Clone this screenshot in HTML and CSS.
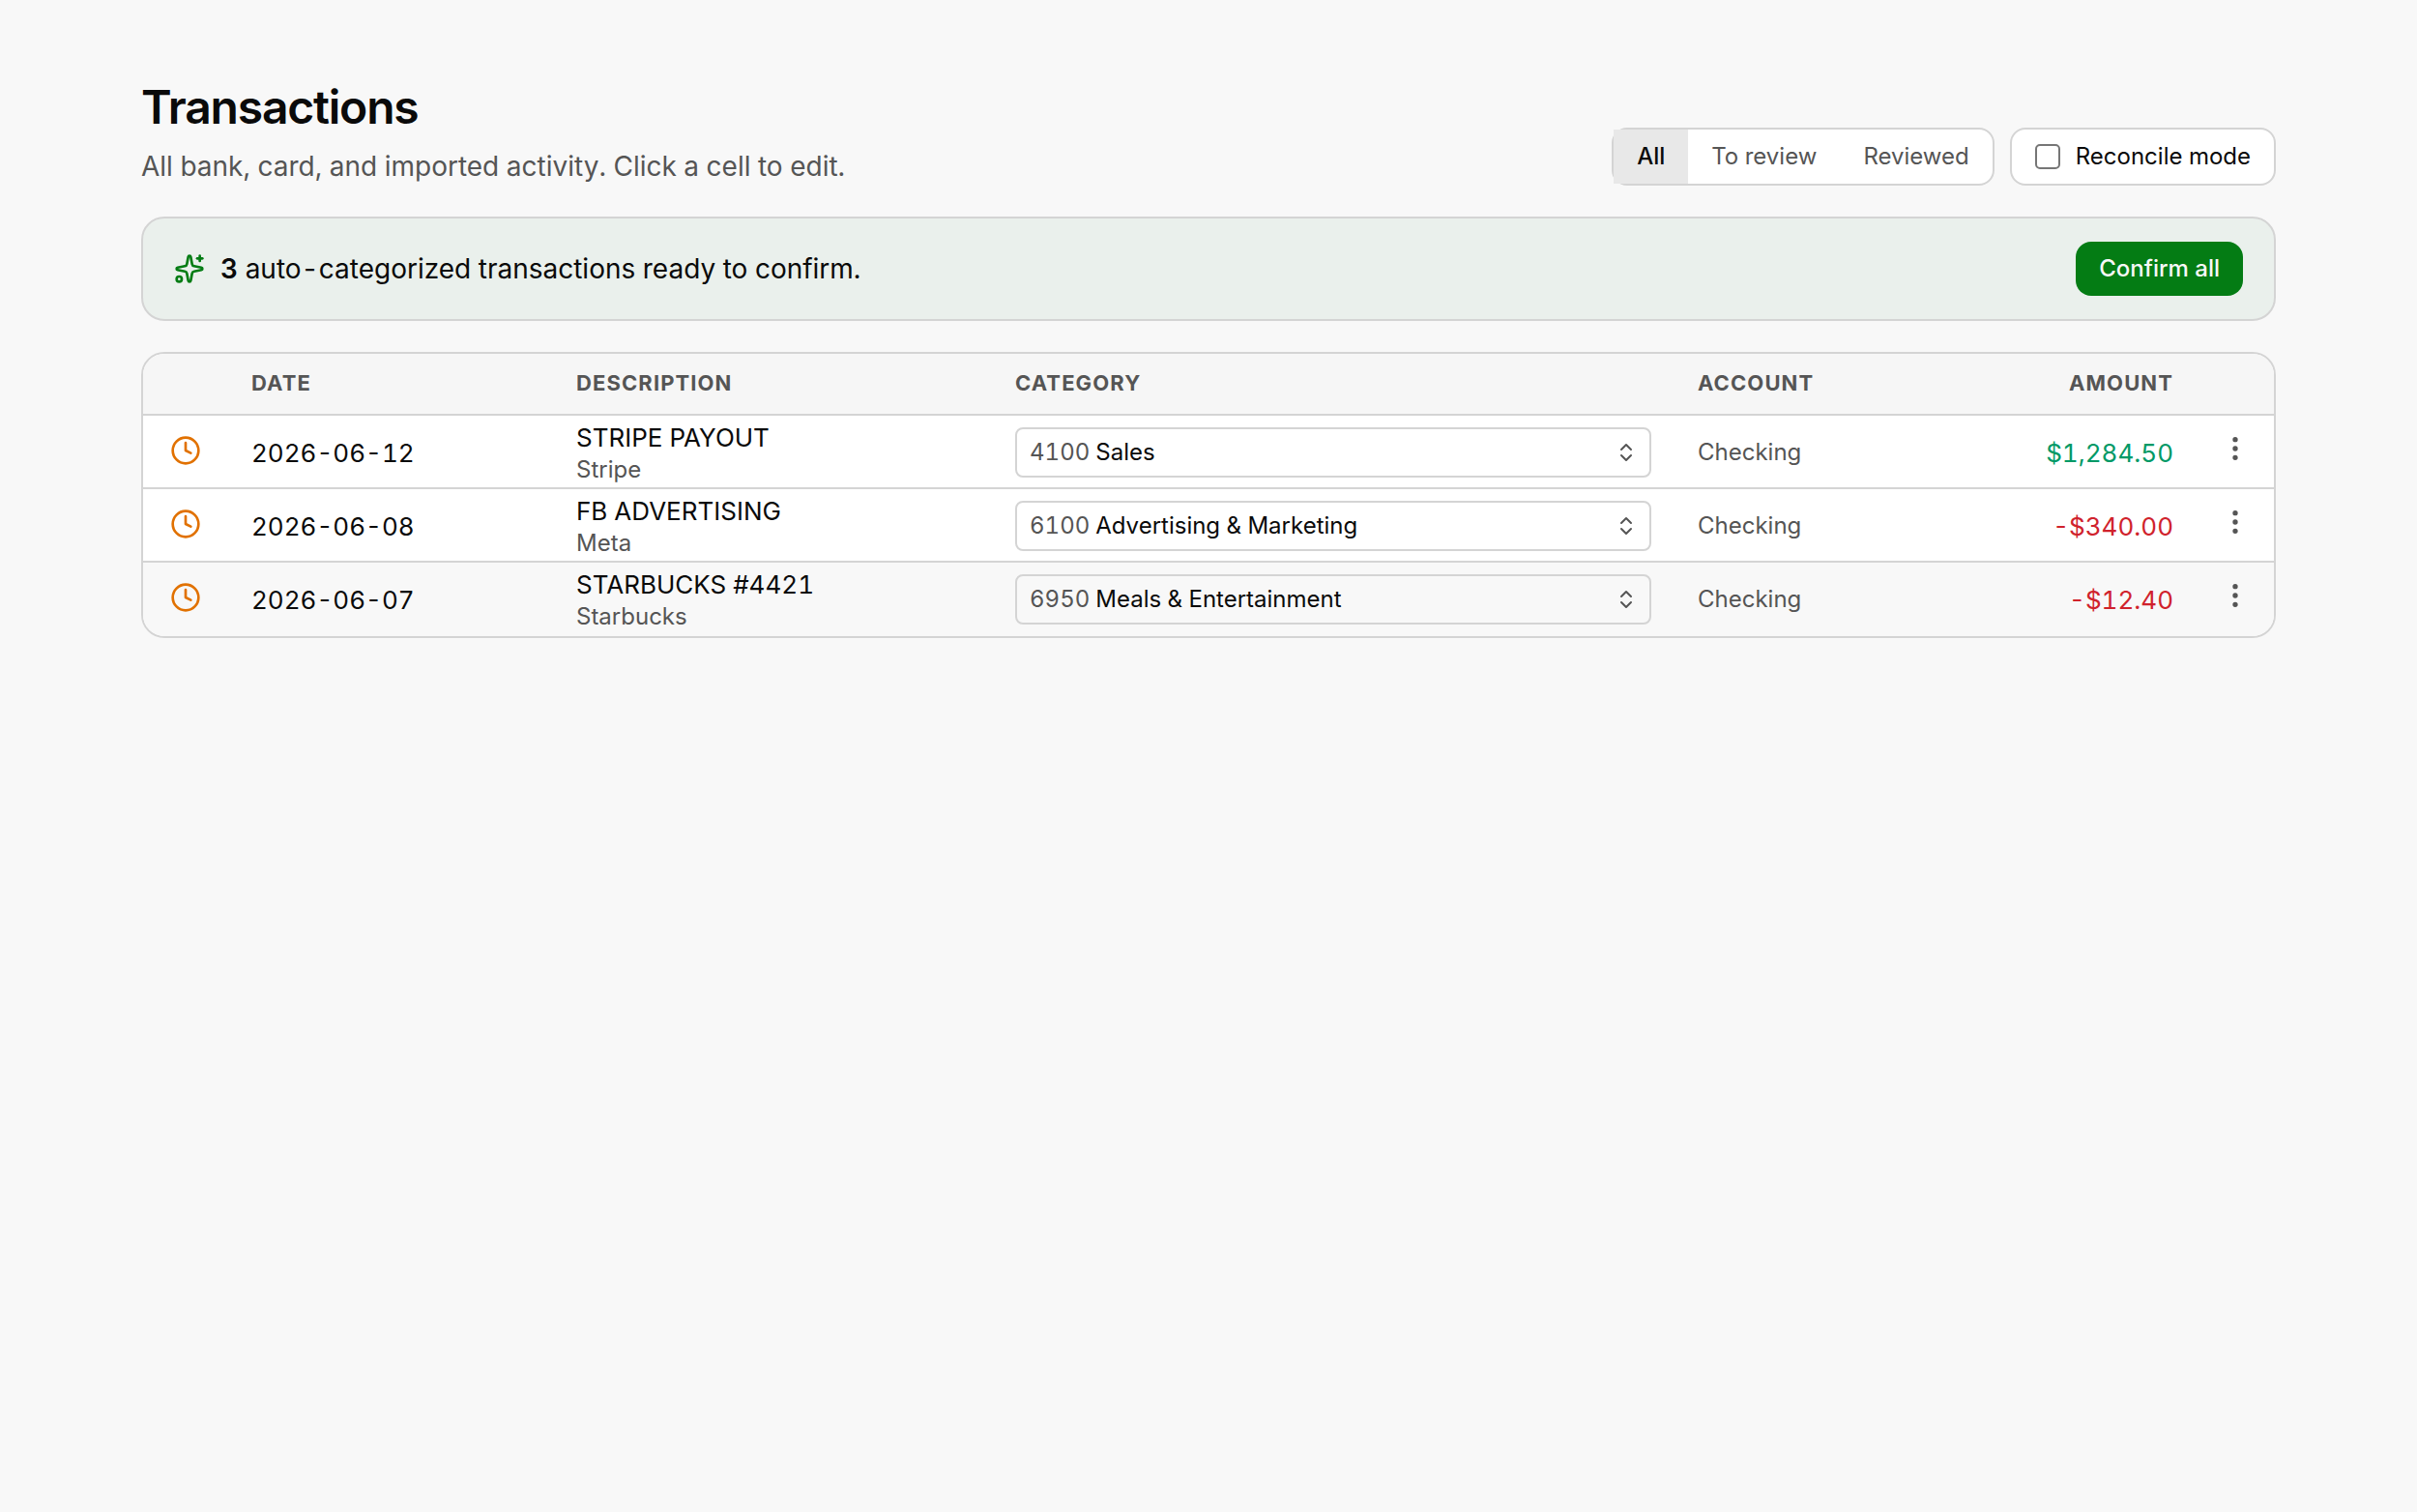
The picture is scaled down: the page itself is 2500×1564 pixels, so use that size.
FILE: index.html
```html
<!DOCTYPE html>
<html lang="en">
<head>
<meta charset="utf-8">
<meta name="viewport" content="width=device-width, initial-scale=1">
<title>Transactions</title>
<link rel="stylesheet" href="styles.css">
</head>
<body>
<svg class="sprite" aria-hidden="true">
  <symbol id="clock" viewBox="0 0 24 24"><circle cx="12" cy="12" r="10"/><path d="M12 6v6l4 2"/></symbol>
  <symbol id="chevrons" viewBox="0 0 24 24"><path d="m7 15 5 5 5-5"/><path d="m7 9 5-5 5 5"/></symbol>
  <symbol id="dots" viewBox="0 0 24 24"><circle cx="12" cy="12" r="1"/><circle cx="12" cy="5" r="1"/><circle cx="12" cy="19" r="1"/></symbol>
</svg>
<main class="page">
  <header class="header">
    <div>
      <h1 class="title">Transactions</h1>
      <p class="subtitle">All bank, card, and imported activity. Click a cell to edit.</p>
    </div>
    <div class="controls">
      <div class="segments" role="group" aria-label="Filter transactions">
        <button class="segment segment-active" type="button" aria-pressed="true">All</button>
        <button class="segment" type="button" aria-pressed="false">To review</button>
        <button class="segment" type="button" aria-pressed="false">Reviewed</button>
      </div>
      <label class="reconcile"><input class="checkbox" type="checkbox">Reconcile mode</label>
    </div>
  </header>

  <section class="banner">
    <svg class="icon icon-sparkles" viewBox="0 0 24 24" aria-hidden="true">
      <path d="M11.017 2.814a1 1 0 0 1 1.966 0l1.051 5.558a2 2 0 0 0 1.594 1.594l5.558 1.051a1 1 0 0 1 0 1.966l-5.558 1.051a2 2 0 0 0-1.594 1.594l-1.051 5.558a1 1 0 0 1-1.966 0l-1.051-5.558a2 2 0 0 0-1.594-1.594l-5.558-1.051a1 1 0 0 1 0-1.966l5.558-1.051a2 2 0 0 0 1.594-1.594z"/>
      <path d="M20 2v4"/><path d="M22 4h-4"/><circle cx="4" cy="20" r="2"/>
    </svg>
    <p class="banner-text"><strong>3</strong> auto-categorized transactions ready to confirm.</p>
    <button class="confirm" type="button">Confirm all</button>
  </section>

  <div class="card">
    <table class="table">
      <colgroup>
        <col class="col-status"><col class="col-date"><col class="col-description"><col><col class="col-account"><col class="col-amount"><col class="col-menu">
      </colgroup>
      <thead>
        <tr>
          <th aria-label="Status"></th><th>Date</th><th>Description</th><th>Category</th><th>Account</th><th class="right">Amount</th><th aria-label="Actions"></th>
        </tr>
      </thead>
      <tbody>
        <tr>
          <td class="status"><svg class="icon icon-clock" role="img" aria-label="To review"><use href="#clock"/></svg></td>
          <td>2026-06-12</td>
          <td class="details"><div>STRIPE PAYOUT</div><div class="merchant">Stripe</div></td>
          <td class="category-cell"><div class="category"><label class="code" for="category-1">4100</label><select class="select" id="category-1"><option>Sales</option></select><svg class="icon icon-chevrons" aria-hidden="true"><use href="#chevrons"/></svg></div></td>
          <td class="account">Checking</td>
          <td class="right positive">$1,284.50</td>
          <td class="actions"><button class="menu" type="button" aria-label="Actions"><svg class="icon icon-dots"><use href="#dots"/></svg></button></td>
        </tr>
        <tr>
          <td class="status"><svg class="icon icon-clock" role="img" aria-label="To review"><use href="#clock"/></svg></td>
          <td>2026-06-08</td>
          <td class="details"><div>FB ADVERTISING</div><div class="merchant">Meta</div></td>
          <td class="category-cell"><div class="category"><label class="code" for="category-2">6100</label><select class="select" id="category-2"><option>Advertising &amp; Marketing</option></select><svg class="icon icon-chevrons" aria-hidden="true"><use href="#chevrons"/></svg></div></td>
          <td class="account">Checking</td>
          <td class="right negative">-$340.00</td>
          <td class="actions"><button class="menu" type="button" aria-label="Actions"><svg class="icon icon-dots"><use href="#dots"/></svg></button></td>
        </tr>
        <tr class="muted-row">
          <td class="status"><svg class="icon icon-clock" role="img" aria-label="To review"><use href="#clock"/></svg></td>
          <td>2026-06-07</td>
          <td class="details"><div>STARBUCKS #4421</div><div class="merchant">Starbucks</div></td>
          <td class="category-cell"><div class="category"><label class="code" for="category-3">6950</label><select class="select" id="category-3"><option>Meals &amp; Entertainment</option></select><svg class="icon icon-chevrons" aria-hidden="true"><use href="#chevrons"/></svg></div></td>
          <td class="account">Checking</td>
          <td class="right negative">-$12.40</td>
          <td class="actions"><button class="menu" type="button" aria-label="Actions"><svg class="icon icon-dots"><use href="#dots"/></svg></button></td>
        </tr>
      </tbody>
    </table>
  </div>
</main>
</body>
</html>
```
FILE: styles.css
```css
:root {
  --bg: #f8f8f8;
  --ink: #0a0a0a;
  --muted: #555555;
  --border: #d4d4d4;
  --green: #047c14;
}
*, *::before, *::after { box-sizing: border-box; }
body {
  margin: 0;
  background: var(--bg);
  color: var(--ink);
  font-family: Inter, "Liberation Sans", sans-serif;
  font-size: 28px;
  line-height: 40px;
  font-feature-settings: "tnum";
}
button, select, input { font: inherit; font-feature-settings: inherit; color: inherit; margin: 0; }
h1, p { margin: 0; }
.sprite { display: none; }
.icon {
  display: block;
  flex: none;
  fill: none;
  stroke: currentColor;
  stroke-width: 2;
  stroke-linecap: round;
  stroke-linejoin: round;
}
.page {
  max-width: 2304px;
  margin: 0 auto;
  padding: 80px 48px;
  display: flex;
  flex-direction: column;
  gap: 32px;
}
.header {
  display: flex;
  flex-wrap: wrap;
  align-items: flex-end;
  justify-content: space-between;
  gap: 24px;
}
.title {
  font-size: 48px;
  line-height: 62px;
  font-weight: 600;
  letter-spacing: -0.025em;
}
.subtitle { margin-top: 10px; color: var(--muted); }
.controls { display: flex; gap: 16px; font-size: 24px; line-height: 32px; }
.segments, .reconcile {
  display: flex;
  background: #ffffff;
  border: 2px solid var(--border);
  border-radius: 16px;
}
.segment {
  padding: 12px 24px;
  border: 0;
  background: none;
  color: var(--muted);
}
.segment-active { background: #e8e8e8; color: var(--ink); font-weight: 500; }
.reconcile { align-items: center; gap: 16px; padding: 12px 24px; }
.checkbox {
  appearance: none;
  width: 26px;
  height: 26px;
  border: 2px solid #767676;
  border-radius: 5px;
  background: #ffffff;
}
.banner {
  display: flex;
  align-items: center;
  gap: 16px;
  padding: 24px 32px;
  border: 2px solid var(--border);
  border-radius: 24px;
  background: #eaf0ec;
}
.icon-sparkles { width: 32px; height: 32px; color: var(--green); }
.banner-text { flex: 1; }
.banner-text strong { font-weight: 600; }
.confirm {
  padding: 12px 24px;
  border: 0;
  border-radius: 16px;
  background: var(--green);
  color: #f8f8f8;
  font-size: 24px;
  line-height: 32px;
  font-weight: 500;
}
.card {
  overflow: hidden;
  border: 2px solid var(--border);
  border-radius: 24px;
  background: #ffffff;
}
.table {
  width: 100%;
  table-layout: fixed;
  border-collapse: separate;
  border-spacing: 0;
}
.col-status { width: 88px; }
.col-date { width: 336px; }
.col-description { width: 454px; }
.col-account { width: 270px; }
.col-amount { width: 270px; }
.col-menu { width: 80px; }
th {
  padding: 14px 24px 16px;
  border-bottom: 2px solid var(--border);
  background: #f6f6f6;
  color: var(--muted);
  font-size: 22px;
  line-height: 32px;
  font-weight: 700;
  letter-spacing: 0.05em;
  text-align: left;
  text-transform: uppercase;
}
td {
  height: 76px;
  padding: 4px 24px 0;
  border-bottom: 2px solid var(--border);
  font-size: 26px;
  line-height: 32px;
}
tbody tr:last-child td { border-bottom-color: transparent; }
.right { text-align: right; }
.muted-row { background: #f8f8f8; }
.positive { color: #009966; }
.negative { color: #d0222c; }
.status { padding: 0 0 2px; }
.actions { padding: 0 0 6px; }
.category-cell, .account { padding-top: 2px; }
.icon-clock { width: 32px; height: 32px; margin: 0 auto; color: #e17100; }
.merchant, .account { color: var(--muted); font-size: 24px; }
.details { padding-top: 6px; }
.merchant { line-height: 34px; }
.category {
  display: flex;
  align-items: center;
  gap: 6px;
  height: 52px;
  padding: 0 12px 0 13px;
  border: 2px solid var(--border);
  border-radius: 8px;
  font-size: 24px;
}
.code { color: var(--muted); }
.select {
  flex: 1;
  appearance: none;
  padding: 0;
  border: 0;
  background: none;
}
.icon-chevrons { width: 24px; height: 24px; color: var(--muted); }
.menu {
  display: block;
  margin: 0 auto;
  padding: 8px;
  border: 0;
  background: none;
  color: var(--muted);
}
.icon-dots { width: 32px; height: 32px; }
```
